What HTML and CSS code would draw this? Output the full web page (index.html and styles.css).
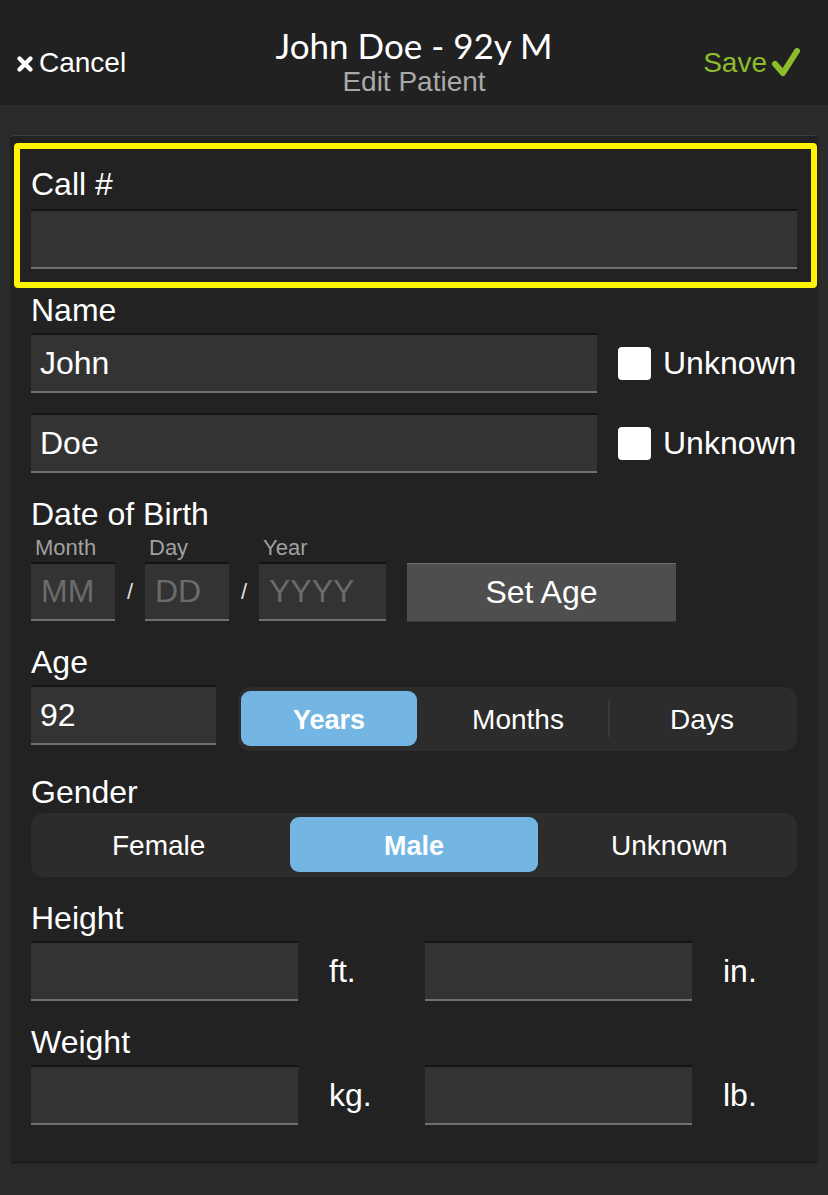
FILE: index.html
```html
<!DOCTYPE html>
<html>
<head>
<meta charset="utf-8">
<title>Edit Patient</title>
<link rel="stylesheet" href="styles.css">
</head>
<body>
<header class="topbar">
  <div class="nav-left">
    <svg class="x-icon" width="18" height="18" viewBox="0 0 18 18"><path d="M3.5 3.5 L14.5 14.5 M14.5 3.5 L3.5 14.5" stroke="#fff" stroke-width="4.4" stroke-linecap="round"/></svg>
    <span class="nav-text">Cancel</span>
  </div>
  <div class="nav-center">
    <div class="title">John Doe - 92y M</div>
    <div class="subtitle">Edit Patient</div>
  </div>
  <div class="nav-right">
    <span class="save-text">Save</span>
    <svg class="check-icon" width="32" height="31" viewBox="0 0 32 31"><path d="M5 18 L13 27 L27 5" fill="none" stroke="#8dbd2b" stroke-width="6" stroke-linecap="round" stroke-linejoin="round"/></svg>
  </div>
</header>

<main class="panel">
  <section class="highlight">
    <div class="label">Call #</div>
    <div class="field field-full"></div>
  </section>

  <section class="group group-name">
    <div class="label">Name</div>
    <div class="check-row">
      <div class="field field-name">John</div>
      <div class="checkbox"></div>
      <span class="check-label">Unknown</span>
    </div>
    <div class="check-row check-row-2">
      <div class="field field-name">Doe</div>
      <div class="checkbox"></div>
      <span class="check-label">Unknown</span>
    </div>
  </section>

  <section class="group">
    <div class="label">Date of Birth</div>
    <div class="dob-row">
      <div class="dob-part">
        <div class="sublabel">Month</div>
        <div class="field field-mm placeholder">MM</div>
      </div>
      <div class="dob-sep">/</div>
      <div class="dob-part">
        <div class="sublabel">Day</div>
        <div class="field field-mm placeholder">DD</div>
      </div>
      <div class="dob-sep">/</div>
      <div class="dob-part">
        <div class="sublabel">Year</div>
        <div class="field field-yyyy placeholder">YYYY</div>
      </div>
      <div class="set-age">Set Age</div>
    </div>
  </section>

  <section class="group">
    <div class="label">Age</div>
    <div class="age-row">
      <div class="field field-age">92</div>
      <div class="segmented seg-age">
        <div class="seg seg-active">Years</div>
        <div class="seg seg-divided">Months</div>
        <div class="seg">Days</div>
      </div>
    </div>
  </section>

  <section class="group">
    <div class="label">Gender</div>
    <div class="segmented seg-gender">
      <div class="seg">Female</div>
      <div class="seg seg-active">Male</div>
      <div class="seg">Unknown</div>
    </div>
  </section>

  <section class="group">
    <div class="label">Height</div>
    <div class="measure-row">
      <div class="field field-measure"></div>
      <div class="unit">ft.</div>
      <div class="field field-measure"></div>
      <div class="unit unit-last">in.</div>
    </div>
  </section>

  <section class="group">
    <div class="label">Weight</div>
    <div class="measure-row">
      <div class="field field-measure"></div>
      <div class="unit">kg.</div>
      <div class="field field-measure"></div>
      <div class="unit unit-last">lb.</div>
    </div>
  </section>
</main>
</body>
</html>
```

FILE: styles.css
```css
* { box-sizing: border-box; }

html, body {
  margin: 0;
  padding: 0;
}

body {
  width: 828px;
  height: 1195px;
  overflow: hidden;
  background: #2b2b2b;
  font-family: "Liberation Sans", Arial, sans-serif;
  color: #ffffff;
}

/* ---------- header ---------- */
.topbar {
  height: 105px;
  background: #212121;
  display: grid;
  grid-template-columns: 1fr auto 1fr;
  align-items: start;
  padding: 0 21px;
}

.nav-left {
  display: flex;
  align-items: center;
  margin-top: 47px;
  margin-left: -5px;
}

.x-icon {
  margin-top: 1px;
  margin-right: 5px;
}

.nav-text {
  font-size: 28px;
  line-height: 32px;
}

.nav-center {
  margin-top: 25px;
  text-align: center;
}

.title {
  font-family: Lato, "Open Sans", sans-serif;
  font-size: 35px;
  line-height: 40px;
  color: #ffffff;
}

.subtitle {
  font-size: 28px;
  line-height: 30px;
  color: #a9a9a9;
  margin-top: 2px;
}

.nav-right {
  display: flex;
  justify-content: flex-end;
  align-items: center;
  margin-top: 47px;
  margin-right: 5px;
}

.save-text {
  font-size: 28px;
  line-height: 32px;
  color: #8dbd2b;
}

.check-icon {
  margin-left: 3px;
  margin-top: -3px;
}

/* ---------- panel ---------- */
.panel {
  margin: 30px 11px 0 11px;
  background: #222222;
  border-top: 1px solid #3e3e3e;
  border-radius: 3px;
  box-shadow: 0 1px 2px rgba(0, 0, 0, 0.6);
  padding: 0 20px 37px 20px;
}

.highlight {
  margin: 7px -20px 0 -17px;
  border: 6px solid #fff500;
  border-radius: 4px;
  padding: 17px 14px 13px 11px;
}

.label {
  font-size: 32px;
  line-height: 36px;
  color: #ffffff;
}

.group {
  margin-top: 23px;
}

.group-name {
  margin-top: 4px;
}

.field {
  height: 60px;
  background: #333333;
  border-top: 2px solid #131313;
  border-bottom: 2px solid #707070;
  font-size: 32px;
  line-height: 56px;
  padding-left: 9px;
  color: #ffffff;
  margin-top: 5px;
  flex-shrink: 0;
}

.field-full {
  margin-top: 7px;
}

/* name rows */
.check-row {
  display: flex;
  align-items: center;
  margin-top: 5px;
}

.check-row .field {
  margin-top: 0;
}

.check-row-2 {
  margin-top: 20px;
}

.field-name {
  width: 566px;
}

.checkbox {
  width: 33px;
  height: 33px;
  background: #ffffff;
  border-radius: 4px;
  margin-left: 21px;
  flex-shrink: 0;
}

.check-label {
  font-size: 32px;
  margin-left: 12px;
}

/* date of birth */
.dob-row {
  display: flex;
  align-items: flex-end;
  margin-top: 4px;
}

.dob-part {
  display: flex;
  flex-direction: column;
}

.sublabel {
  font-size: 22px;
  line-height: 24px;
  color: #a0a0a0;
  padding-left: 4px;
}

.dob-part .field {
  margin-top: 2px;
  height: 59px;
  line-height: 55px;
}

.placeholder {
  color: #6b6b6b;
  padding-left: 10px;
}

.field-mm {
  width: 84px;
}

.field-yyyy {
  width: 127px;
}

.dob-sep {
  width: 30px;
  text-align: center;
  font-size: 22px;
  line-height: 59px;
  color: #e0e0e0;
  padding-top: 4px;
}

.set-age {
  width: 269px;
  height: 59px;
  margin-left: 21px;
  margin-bottom: -1px;
  background: #4e4e4e;
  border-top: 1px solid #6f6f6f;
  border-bottom: 1px solid #3a3a3a;
  font-size: 32px;
  line-height: 57px;
  text-align: center;
  color: #ffffff;
}

/* age */
.age-row {
  display: flex;
  align-items: flex-start;
  margin-top: 5px;
}

.field-age {
  width: 185px;
  margin-top: 0;
}

.segmented {
  display: flex;
  height: 64px;
  background: #2c2c2c;
  border-radius: 13px;
  padding: 4px 3px 5px 3px;
}

.seg-age {
  flex: 1;
  margin-left: 22px;
  margin-top: 2px;
}

.seg-gender {
  margin-top: 3px;
  padding: 4px 4px 5px 4px;
}

.seg {
  flex: 1;
  display: flex;
  align-items: center;
  justify-content: center;
  padding-top: 3px;
  font-size: 28px;
  color: #ffffff;
  border-radius: 9px;
  position: relative;
}

.seg-age .seg-active {
  flex: 0 0 176px;
  margin-right: 9px;
}

.seg-gender .seg {
  margin: 0 4px;
}

.seg-gender .seg:first-child {
  margin-left: 0;
}

.seg-gender .seg:last-child {
  margin-right: 0;
}

.seg-active {
  background: #74b6e3;
  font-weight: bold;
  font-size: 27px;
}

.seg-divided {
  border-radius: 0;
}

.seg-divided::after {
  content: "";
  position: absolute;
  right: 0;
  top: 9px;
  bottom: 9px;
  width: 2px;
  background: #3a3a3a;
}

/* height / weight */
.measure-row {
  display: flex;
  align-items: center;
  margin-top: 5px;
}

.measure-row .field {
  margin-top: 0;
}

.field-measure {
  width: 267px;
}

.unit {
  width: 127px;
  flex-shrink: 0;
  padding-left: 31px;
  font-size: 32px;
  color: #ffffff;
}

.unit-last {
  width: auto;
  flex: 1;
}
```
